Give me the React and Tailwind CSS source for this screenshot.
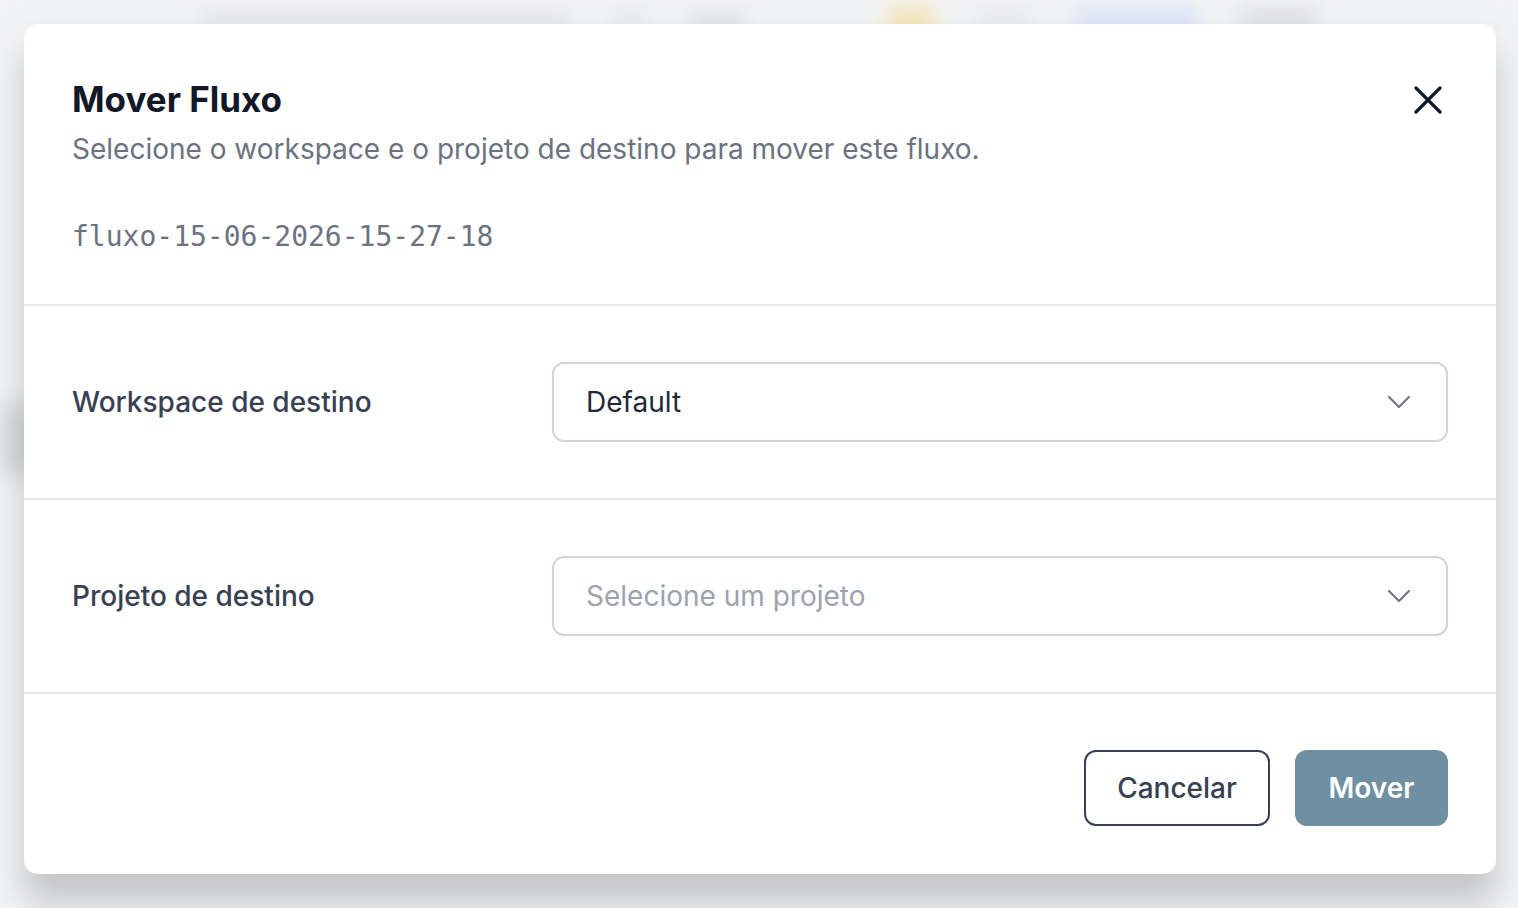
import React from "react";

function Chevron() {
  return (
    <svg width="22" height="12" viewBox="0 0 22 12" fill="none" className="shrink-0">
      <polyline points="1,1 11,11 21,1" stroke="#6b7280" strokeWidth="2" strokeLinecap="round" strokeLinejoin="round" />
    </svg>
  );
}

function CloseIcon() {
  return (
    <svg width="28" height="28" viewBox="0 0 28 28" fill="none">
      <line x1="2" y1="2" x2="26" y2="26" stroke="#111827" strokeWidth="3.2" strokeLinecap="round" />
      <line x1="26" y1="2" x2="2" y2="26" stroke="#111827" strokeWidth="3.2" strokeLinecap="round" />
    </svg>
  );
}

function Select({ value, placeholder }) {
  return (
    <button
      type="button"
      className="flex h-[80px] w-full items-center justify-between rounded-[12px] border-2 border-[#d1d5db] bg-white pl-[32px] pr-[36px] text-left"
    >
      <span className={value ? "text-[28px] text-[#1f2937]" : "text-[28px] text-[#9ca3af]"}>
        {value || placeholder}
      </span>
      <Chevron />
    </button>
  );
}

function FieldRow({ label, children }) {
  return (
    <div className="grid grid-cols-[480px_1fr] items-center px-[48px] py-[56px]">
      <span className="text-[28px] font-medium text-[#374151]">{label}</span>
      {children}
    </div>
  );
}

export default function App() {
  return (
    <div
      className="relative h-[908px] w-[1518px] overflow-hidden bg-[#f3f4f6]"
      style={{ fontFamily: "Inter, 'Noto Sans', sans-serif" }}
    >
      {/* blurred page behind the dialog */}
      <div className="flex h-full flex-col blur-[10px]">
        <div className="flex h-[44px] items-center gap-[40px] bg-[#f1f2f4] px-[200px]">
          <div className="h-[14px] w-[380px] rounded bg-[#dcdde0]" />
          <div className="h-[14px] w-[40px] rounded bg-[#e0e1e4]" />
          <div className="h-[14px] w-[60px] rounded bg-[#d8d9dc]" />
          <div className="ml-[100px] h-[30px] w-[50px] rounded bg-[#f3e3b5]" />
          <div className="h-[14px] w-[60px] rounded bg-[#e2e3e6]" />
          <div className="h-[30px] w-[130px] rounded bg-[#d9e3f6]" />
          <div className="ml-auto h-[30px] w-[80px] rounded bg-[#dedfe2]" />
        </div>
        <div className="flex flex-1">
          <div className="flex w-[60px] flex-col pt-[360px]">
            <div className="h-[70px] w-[40px] rounded bg-[#d6dcdd]" />
          </div>
        </div>
      </div>

      {/* dialog */}
      <div className="absolute left-[24px] top-[24px] flex h-[850px] w-[1472px] flex-col rounded-[14px] bg-white shadow-[0_28px_36px_rgba(0,0,0,0.2)]">
        <div className="relative h-[280px] px-[48px] pt-[55px]">
          <h2 className="text-[35px] font-bold leading-[40px] text-[#111827]">Mover Fluxo</h2>
          <p className="mt-[12px] text-[28px] leading-[36px] text-[#6b7280]">
            Selecione o workspace e o projeto de destino para mover este fluxo.
          </p>
          <p
            className="mt-[52px] text-[28px] leading-[36px] text-[#6b7280]"
            style={{ fontFamily: "'DejaVu Sans Mono', monospace" }}
          >
            fluxo-15-06-2026-15-27-18
          </p>
          <button type="button" className="absolute right-[54px] top-[62px]">
            <CloseIcon />
          </button>
        </div>
        <div className="h-[2px] bg-[#e5e7eb]" />
        <FieldRow label="Workspace de destino">
          <Select value="Default" />
        </FieldRow>
        <div className="h-[2px] bg-[#e5e7eb]" />
        <FieldRow label="Projeto de destino">
          <Select placeholder="Selecione um projeto" />
        </FieldRow>
        <div className="h-[2px] bg-[#e5e7eb]" />
        <div className="flex justify-end gap-[25px] px-[48px] pb-[48px] pt-[56px]">
          <button
            type="button"
            className="h-[76px] w-[186px] rounded-[12px] border-2 border-[#374151] bg-white text-[28px] font-medium text-[#374151]"
          >
            Cancelar
          </button>
          <button
            type="button"
            className="h-[76px] w-[153px] rounded-[12px] bg-[#6f8fa3] text-[28px] font-semibold text-white"
          >
            Mover
          </button>
        </div>
      </div>
    </div>
  );
}
